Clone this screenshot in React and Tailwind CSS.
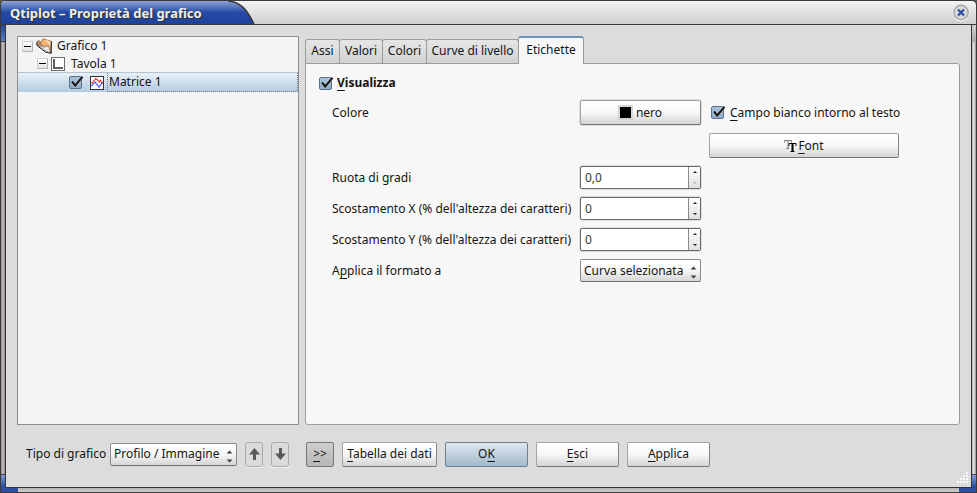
import React from "react";

const BUTTON =
  "flex h-[25px] items-center justify-center rounded-[2px] border border-[#a2a2a2] border-b-[#757575] border-r-[#858585] bg-linear-to-b from-white via-[#f7f7f7] to-[#d4d4d4]";

const U = ({ children }) => (
  <span className="underline decoration-1 underline-offset-[3px]">{children}</span>
);

function Check({ id }) {
  return (
    <span className="relative block h-[13px] w-[13px] shrink-0">
      <input
        id={id}
        type="checkbox"
        defaultChecked
        className="block h-[13px] w-[13px] appearance-none rounded-[2px] border border-[#5c7186] bg-linear-to-b from-[#a9c3dd] to-[#8fadca]"
      />
      <svg className="pointer-events-none absolute top-0 left-0 h-[13px] w-[15px]" viewBox="0 0 15 13">
        <path d="M3 5.5 L6.2 9.5 L13 1" fill="none" stroke="#fff" strokeOpacity=".4" strokeWidth="3.5" />
        <path d="M3 5.5 L6.2 9.5 L13.5 0.8" fill="none" stroke="#1c1c1c" strokeWidth="2.2" />
      </svg>
    </span>
  );
}

function Choice({ id, value }) {
  return (
    <span className="relative block">
      <select
        id={id}
        className="block h-[23px] w-full appearance-none rounded-[2px] border border-[#8a8a8a] border-b-[#707070] bg-linear-to-b from-white via-[#f6f6f6] to-[#d6d6d6] pl-[3px]"
      >
        <option>{value}</option>
      </select>
      <svg className="pointer-events-none absolute top-[7px] right-[4px] h-[13px] w-[7px]" viewBox="0 0 7 13">
        <path d="M0.5 3.5 L3.5 0.5 L6.5 3.5Z M0.5 9.5 L6.5 9.5 L3.5 12.5Z" fill="#404040" />
      </svg>
    </span>
  );
}

function Spin({ id, value, atMin }) {
  return (
    <span className="flex h-[23px] rounded-[2px] border border-[#6a6a6a] bg-white shadow-[0_0_0_1px_#dddddd]">
      <input
        id={id}
        type="text"
        defaultValue={value}
        className="min-w-0 flex-1 bg-transparent pl-[4px] text-[#3a3a3a] outline-none"
      />
      <span className="flex w-[12px] flex-col border-l border-[#8a8a8a] bg-linear-to-b from-white to-[#e0e0e0]">
        <button type="button" aria-label="Aumenta" className="flex flex-1 items-center justify-center">
          <svg className="h-[2px] w-[4px]" viewBox="0 0 4 2">
            <path d="M0 2 L2 0 L4 2Z" fill="#222" />
          </svg>
        </button>
        <button type="button" aria-label="Diminuisci" className="flex flex-1 items-center justify-center">
          <svg className="h-[2px] w-[4px]" viewBox="0 0 4 2">
            <path d="M0 0 L4 0 L2 2Z" fill={atMin ? "#b8b8b8" : "#222"} />
          </svg>
        </button>
      </span>
    </span>
  );
}

function Collapse() {
  return (
    <button
      type="button"
      aria-label="Comprimi"
      className="flex h-[11px] w-[11px] shrink-0 items-center justify-center rounded-[1px] border border-[#d0d0d0] border-r-[#b4b4b4] border-b-[#b4b4b4] bg-linear-to-b from-white to-[#e2e2e2]"
    >
      <span className="h-px w-[7px] bg-black" />
    </button>
  );
}

function LeftEdge() {
  return (
    <div className="flex w-[5px] flex-col border-l border-[#3a3a3a]">
      <div className="h-[17px] border-b border-[#333] bg-linear-to-b from-[#23439a] to-[#5c7cc4]" />
      <div className="flex-1 bg-linear-to-r from-[#8b8484] via-[#c8c4c4] to-[#8b8484]" />
      <div className="h-[14px] border-t border-[#444] bg-linear-to-b from-[#7f9bd6] to-[#2442a0]" />
    </div>
  );
}

function RightEdge() {
  return (
    <div className="flex w-[5px] flex-col border-r border-[#3a3a3a]">
      <div className="h-[17px] bg-linear-to-b from-[#d0d0d0] to-[#a8a8a8]" />
      <div className="flex-1 bg-linear-to-r from-[#a8a4a4] via-[#f0f0f0] to-[#8b8484]" />
      <div className="h-[14px] border-t border-[#444] bg-linear-to-b from-[#7f9bd6] to-[#2442a0]" />
    </div>
  );
}

const TABS = [
  { name: "Assi", width: "w-[35px]" },
  { name: "Valori", width: "w-[44px]" },
  { name: "Colori", width: "w-[45px]" },
  { name: "Curve di livello", width: "w-[93px]" },
];

export default function App() {
  return (
    <div className="flex h-screen w-full flex-col bg-[#555] font-['Noto_Sans',sans-serif] text-[12px] leading-4 text-[#141414]">
      <header className="flex h-[25px] shrink-0 items-stretch rounded-t-[5px] border border-[#3a3a3a] bg-linear-to-b from-[#f4f4f4] to-[#cecece]">
        <h1 className="flex items-center rounded-tl-[4px] bg-linear-to-b from-[#90a4d6] via-[#2449a4] via-50% to-[#1f429c] pl-[9px] text-[13px] font-bold text-[#f0f0ea] [text-shadow:1px_1px_1px_#333]">
          <span className="w-[218px] whitespace-nowrap">Qtiplot – Proprietà del grafico</span>
        </h1>
        <svg className="h-[23px] w-[28px] shrink-0" viewBox="0 0 28 23" aria-hidden="true">
          <defs>
            <linearGradient id="cap" x1="0" y1="0" x2="0" y2="1">
              <stop offset="0" stopColor="#90a4d6" />
              <stop offset=".5" stopColor="#2449a4" />
              <stop offset="1" stopColor="#1f429c" />
            </linearGradient>
          </defs>
          <path d="M0 0 C14 1 20 11 26 23 L0 23Z" fill="url(#cap)" />
          <path d="M0 0 C14 1 20 11 26 23" fill="none" stroke="#383838" strokeWidth="1.5" />
        </svg>
        <button type="button" aria-label="Chiudi" className="mr-[6px] ml-auto flex items-center">
          <svg className="h-[18px] w-[18px]" viewBox="0 0 18 18">
            <circle cx="9" cy="9" r="8.5" fill="#fff" />
            <circle cx="9" cy="8.5" r="7.2" fill="#d9d9d9" stroke="#a5a5a5" strokeWidth="1.5" />
            <path d="M6 5.5 L12 11.5 M12 5.5 L6 11.5" stroke="#2d50a8" strokeWidth="2.2" />
          </svg>
        </button>
      </header>

      <div className="flex min-h-0 flex-1">
        <LeftEdge />
        <main className="flex min-w-0 flex-1 flex-col border-x border-b border-[#333] bg-[#dcdcdc] pt-[11px] pr-[11px] pl-[11px]">
          <div className="flex min-h-0 flex-1 gap-[6px]">
            <ul className="w-[282px] shrink-0 border border-[#8f8f8f] bg-[#f4f4f4]">
              <li className="flex h-[18px] items-center pl-1">
                <Collapse />
                <svg className="ml-[3px] h-4 w-4" viewBox="0 0 16 16">
                  <path d="M0.5 4 L3 2.5 L5.5 5 L5.5 9 L2.5 8Z" fill="#c98a54" stroke="#6b5340" strokeWidth=".7" />
                  <path d="M4.5 5.5 L7 0.8 L15 3.2 L15 15 L12 8 L7.5 8.5Z" fill="#f7b36d" stroke="#8a6038" strokeWidth=".7" />
                  <path d="M9 1.8 L14.5 3.4 L14.5 8Z" fill="#fde0bf" />
                  <path d="M1.5 6.5 L7.5 9 L12.5 8 L14.5 15 L9 12.5Z" fill="#e9e9e9" stroke="#777" strokeWidth=".6" />
                  <path d="M0.5 5 L1.5 8 L9.5 14 L15.2 15.4 L15.4 3.2" fill="none" stroke="#222" strokeWidth="1" />
                </svg>
                <span className="ml-[5px]">Grafico 1</span>
              </li>
              <li className="flex h-[17px] items-center pl-[19px]">
                <Collapse />
                <svg className="ml-[3px] h-[14px] w-[14px]" viewBox="0 0 14 14">
                  <rect x=".5" y=".5" width="13" height="13" fill="#fff" stroke="#6c6c6c" />
                  <path d="M3 2 V11 H12" fill="none" stroke="#606060" strokeWidth="2" />
                </svg>
                <span className="ml-[6px]">Tavola 1</span>
              </li>
              <li className="flex h-[20px] items-center border-t border-dotted border-[#b4bcc4] bg-linear-to-b from-[#e9f0f7] to-[#b2cbe2] pl-[51px]">
                <Check id="matrice" />
                <svg className="ml-[8px] h-[14px] w-[14px]" viewBox="0 0 14 14">
                  <rect x=".5" y=".5" width="13" height="13" fill="#fff" stroke="#333" />
                  <path d="M1.5 7.5 L6 2.5 L9.5 6 L10.5 4.5 L12.8 7.5" fill="none" stroke="#f03030" strokeWidth="1.4" strokeDasharray="2 .5" />
                  <path d="M1.5 10 L5 6 L9 11 L12.5 6.5" fill="none" stroke="#4050f0" strokeWidth="1.4" strokeDasharray="2 .5" />
                </svg>
                <label htmlFor="matrice" className="ml-[3px] flex h-full flex-1 items-center border border-t-0 border-dotted border-[#777] pl-px">
                  Matrice 1
                </label>
              </li>
            </ul>

            <section className="flex min-w-0 flex-1 flex-col">
              <div role="tablist" className="z-10 flex items-end">
                {TABS.map((t) => (
                  <button
                    key={t.name}
                    type="button"
                    role="tab"
                    aria-selected="false"
                    className={`${t.width} -mr-px mb-px h-6 rounded-t-[3px] border border-b-0 border-[#9c9c9c] bg-linear-to-b from-[#e6e6e6] to-[#d2d2d2] pb-px whitespace-nowrap`}
                  >
                    {t.name}
                  </button>
                ))}
                <button
                  type="button"
                  role="tab"
                  aria-selected="true"
                  className="h-7 w-[66px] rounded-t-[3px] border border-t-2 border-b-0 border-[#9c9c9c] border-t-[#6b94b8] bg-[#f7f7f7] pb-[3px]"
                >
                  Etichette
                </button>
              </div>
              <div
                role="tabpanel"
                className="-mt-px flex-1 rounded-tr-[3px] rounded-b-[3px] border border-[#9c9c9c] bg-[#f7f7f7] pt-[10px] pl-[13px]"
              >
                <div className="flex h-[18px] items-center gap-[5px] font-bold">
                  <Check id="visualizza" />
                  <label htmlFor="visualizza">
                    <U>V</U>isualizza
                  </label>
                </div>
                <div className="mt-[8px] ml-[13px] grid grid-cols-[248px_121px_198px] items-center gap-y-2">
                  <label htmlFor="colore">Colore</label>
                  <button id="colore" type="button" className={`${BUTTON} gap-1 shadow-[0_0_0_1px_#dddddd]`}>
                    <span className="h-[13px] w-[13px] border border-[#d4d4d4] bg-black shadow-[0_0_0_1px_#d4d4d4]" />
                    nero
                  </button>
                  <div className="ml-[10px] flex items-center gap-[6px]">
                    <Check id="campo" />
                    <label htmlFor="campo" className="whitespace-nowrap">
                      <U>C</U>ampo bianco intorno al testo
                    </label>
                  </div>

                  <button type="button" className={`${BUTTON} col-start-3 ml-2`}>
                    <svg className="h-[14px] w-[13px]" viewBox="0 0 13 14">
                      <path d="M0.5 3.5 V1.5 H7.5 V3.5 M4 1.5 V9.5 M2 9.5 H5" fill="none" stroke="#7c7c7c" strokeWidth="1" />
                      <path d="M5 7 V4.5 H12 V7 M6.5 12.5 H10.5" fill="none" stroke="#000" strokeWidth="1" />
                      <path d="M8.5 4 V13" fill="none" stroke="#000" strokeWidth="2" />
                    </svg>
                    <span className="ml-px">
                      <U>F</U>ont
                    </span>
                  </button>

                  <label htmlFor="ruota">Ruota di gradi</label>
                  <Spin id="ruota" value="0,0" atMin />
                  <label htmlFor="sx" className="col-start-1 whitespace-nowrap">
                    Scostamento X (% dell'altezza dei caratteri)
                  </label>
                  <Spin id="sx" value="0" />
                  <label htmlFor="sy" className="col-start-1 whitespace-nowrap">
                    Scostamento Y (% dell'altezza dei caratteri)
                  </label>
                  <Spin id="sy" value="0" />
                  <label htmlFor="formato" className="col-start-1">
                    A<U>p</U>plica il formato a
                  </label>
                  <Choice id="formato" value="Curva selezionata" />
                </div>
              </div>
            </section>
          </div>

          <footer className="flex h-[62px] shrink-0 items-center pb-[4px]">
            <div className="flex w-[289px] shrink-0 items-center gap-2 pl-[9px]">
              <label htmlFor="tipo" className="w-[76px] whitespace-nowrap">
                Tipo di grafico
              </label>
              <div className="w-[127px]">
                <Choice id="tipo" value="Profilo / Immagine" />
              </div>
              <button type="button" aria-label="Su" className="flex h-[25px] w-[18px] items-center justify-center rounded-[3px] border border-[#aaa] bg-[#dadada] shadow-[0_1px_0_#f2f2f2]">
                <svg className="h-3 w-[11px] shrink-0" viewBox="0 0 11 12">
                  <path d="M0 6.5 L5.5 0 L11 6.5 H7 V12 H4 V6.5Z" fill="#595959" />
                </svg>
              </button>
              <button type="button" aria-label="Giù" className="flex h-[25px] w-[18px] items-center justify-center rounded-[3px] border border-[#aaa] bg-[#dadada] shadow-[0_1px_0_#f2f2f2]">
                <svg className="h-3 w-[11px] shrink-0" viewBox="0 0 11 12">
                  <path d="M0 5.5 L5.5 12 L11 5.5 H7 V0 H4 V5.5Z" fill="#595959" />
                </svg>
              </button>
            </div>
            <div className="flex gap-2">
              <button type="button" className="h-[25px] w-7 rounded-[2px] border border-[#777] bg-linear-to-b from-[#cfcfcf] to-[#b6b6b6]">
                <U>&gt;</U>&gt;
              </button>
              <button type="button" className={`${BUTTON} w-[95px]`}>
                <span>
                  <U>T</U>abella dei dati
                </span>
              </button>
              <button
                type="button"
                className="h-[25px] w-[83px] rounded-[2px] border border-[#6f7f8d] bg-linear-to-b from-[#dce7f0] to-[#a3b9cb]"
              >
                O<U>K</U>
              </button>
              <button type="button" className={`${BUTTON} w-[83px]`}>
                <span>
                  <U>E</U>sci
                </span>
              </button>
              <button type="button" className={`${BUTTON} w-[83px]`}>
                <span>
                  <U>A</U>pplica
                </span>
              </button>
            </div>
            <svg className="-mr-2 ml-auto h-[11px] w-[11px] self-end" viewBox="0 0 11 11" aria-hidden="true">
              <path
                d="M9 0h2v2h-2zM6 3h2v2h-2zM9 3h2v2h-2zM3 6h2v2h-2zM6 6h2v2h-2zM9 6h2v2h-2zM0 9h2v2h-2zM3 9h2v2h-2zM6 9h2v2h-2zM9 9h2v2h-2z"
                fill="#f8f8f8"
              />
            </svg>
          </footer>
        </main>
        <RightEdge />
      </div>
      <div className="flex h-[5px] shrink-0 border border-t-0 border-[#3a3a3a]">
        <div className="w-[17px] bg-[#2e4ea6]" />
        <div className="flex-1 bg-linear-to-b from-[#b4b4b4] to-[#d0d0d0]" />
        <div className="w-[17px] bg-[#2e4ea6]" />
      </div>
    </div>
  );
}
